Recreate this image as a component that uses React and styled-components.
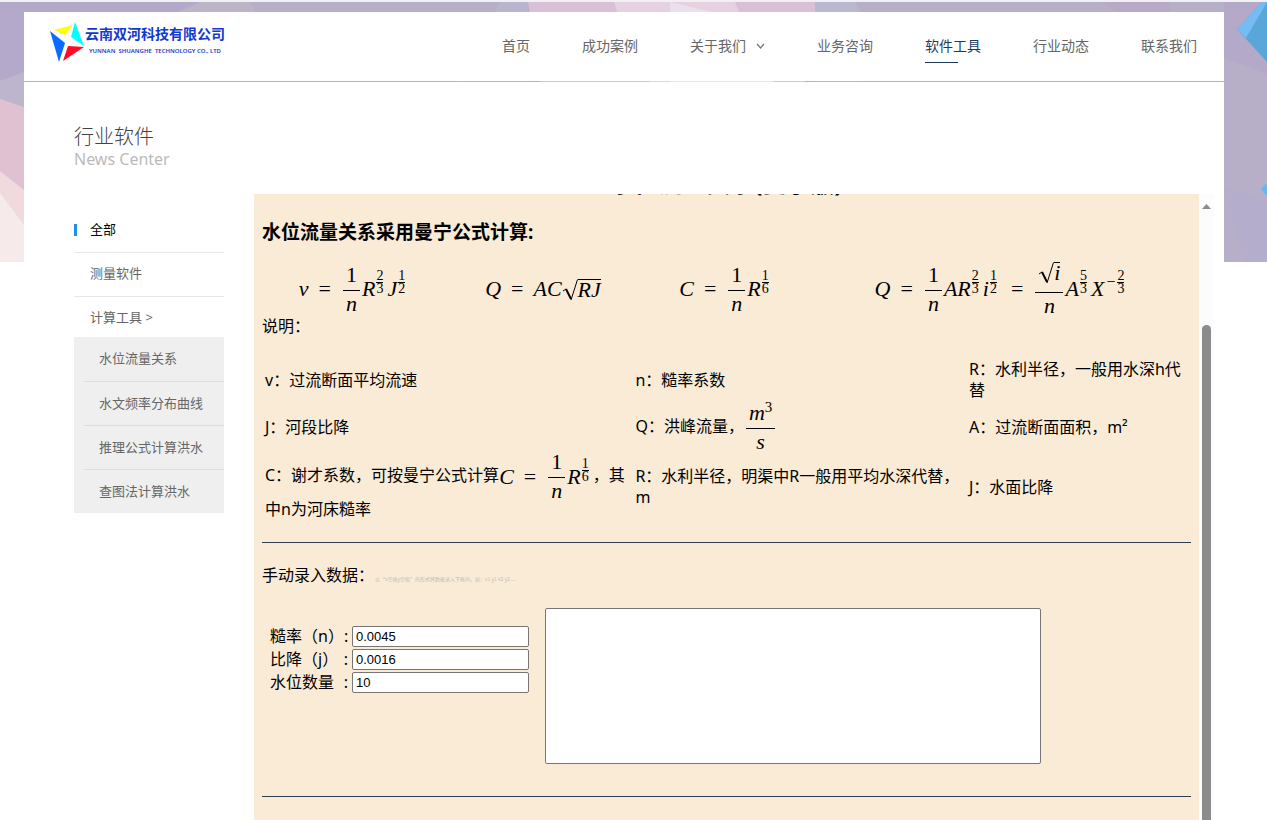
import styled, { createGlobalStyle } from 'styled-components'

const GlobalStyle = createGlobalStyle`
  * {
    box-sizing: border-box;
  }

  body {
    margin: 0;
    background: #fff;
    color: #000;
    font-family: 'Noto Sans', 'Noto Sans CJK SC', sans-serif;
    font-size: 16px;
    line-height: 21px;
  }

  a {
    color: inherit;
    text-decoration: none;
  }

  ul {
    margin: 0;
    padding: 0;
    list-style: none;
  }
`

const Page = styled.div`
  position: relative;
  display: flex;
  flex-direction: column;
  height: 100vh;
  padding: 10px 43px 0 24px;
  border-top: 2px solid #f1f1f1;
  overflow: hidden;
`

const Backdrop = styled.svg`
  position: absolute;
  top: 0;
  left: 0;
  width: 100%;
  height: 260px;
  z-index: -1;
`

const Header = styled.header`
  display: flex;
  align-items: center;
  justify-content: space-between;
  height: 69px;
  /* the 1px gap lets the backdrop show through as a rule */
  margin-bottom: 1px;
  padding: 0 27px 0 26px;
  background: #fff;
`

const Logo = styled.a`
  display: flex;
  height: 49px;
  color: #1238d0;

  svg {
    width: 35px;
    height: 41px;
  }
`

const LogoName = styled.strong`
  display: block;
  font-size: 14px;
  line-height: 24px;
`

const LogoSub = styled.small`
  display: block;
  padding-left: 4px;
  font-size: 6px;
  font-weight: 600;
  line-height: 10px;
  white-space: pre;
`

const Nav = styled.nav`
  display: flex;
  gap: 52px;
  font-size: 14px;
`

const NavLink = styled.a`
  position: relative;
  display: flex;
  align-items: center;
  gap: 10px;
  padding-bottom: 2px;
  color: ${({ $active }) => ($active ? '#1c3a5e' : '#666')};

  &::after {
    content: '';
    display: ${({ $active }) => ($active ? 'block' : 'none')};
    position: absolute;
    top: 27px;
    left: 0;
    width: 33px;
    height: 1px;
    background: #1c3a5e;
  }
`

const Body = styled.div`
  display: flex;
  flex: 1;
  flex-direction: column;
  min-height: 0;
  padding: 43px 10px 0 50px;
  background: #fff;
`

const Title = styled.h1`
  margin: 0;
  color: #444;
  font-size: 20px;
  font-weight: 300;
  line-height: 24px;
`

const Subtitle = styled.p`
  margin: 0;
  color: #bbb;
  line-height: 21px;
`

const Columns = styled.div`
  display: flex;
  flex: 1;
  gap: 30px;
  min-height: 0;
  margin-top: 24px;
`

const Sidebar = styled.aside`
  flex: 0 0 150px;
  padding-top: 15px;
  color: #666;
  font-size: 13px;
`

const SideLink = styled.a`
  display: flex;
  align-items: center;
  height: ${({ $last }) => ($last ? '40px' : '44px')};
  padding-bottom: ${({ $last }) => ($last ? '0' : '2px')};
  padding-left: ${({ $active }) => ($active ? '0' : '16px')};
  border-bottom: ${({ $last }) => ($last ? '0' : '1px solid #e8e8e8')};
  color: ${({ $active }) => ($active ? '#000' : 'inherit')};

  &::before {
    content: '';
    display: ${({ $active }) => ($active ? 'block' : 'none')};
    width: 3px;
    height: 12px;
    margin-right: 13px;
    background: #2490e3;
  }
`

const SubMenu = styled.ul`
  padding-left: 10px;
  background: #efefef;

  li + li {
    border-top: 1px solid #ddd;
  }

  a {
    display: flex;
    align-items: center;
    height: 43px;
    padding: 0 0 1px 15px;
  }

  li:first-child a {
    height: 44px;
  }
`

const Viewport = styled.div`
  display: flex;
  flex: 1;
  min-width: 0;
  overflow: hidden;
`

const Sheet = styled.main`
  flex: 1;
  min-width: 0;
  padding: 0 8px;
  background: #faebd7;
`

const SheetTitle = styled.h2`
  margin: -27px 0 0;
  font-size: 24px;
  line-height: 32px;
  text-align: center;
`

const SheetHeading = styled.h3`
  margin: 19px 0 0;
  font-size: 19px;
  line-height: 28px;
`

const ScrollTrack = styled.div`
  display: flex;
  flex: 0 0 15px;
  flex-direction: column;
  align-items: center;
  padding-top: 10px;
  background: #fcfcfc;

  svg {
    width: 9px;
    height: 5px;
  }
`

const ScrollThumb = styled.div`
  flex: 1;
  width: 9px;
  margin-top: 116px;
  border-radius: 5px 5px 0 0;
  background: #8b8b8b;
`

const Math = styled.span`
  display: inline-flex;
  align-items: center;
  font-family: 'Liberation Serif', serif;
  font-size: 22px;
  font-style: italic;
  line-height: 24px;
  vertical-align: middle;
`

const Formulas = styled.div`
  display: grid;
  grid-template-columns: 184fr 194fr 172fr 379fr;
  align-items: center;
  justify-items: center;
  height: 70px;
  padding-top: 14px;
`

const Equals = styled.span`
  padding: 0 10px;
  font-style: normal;
`

const Frac = styled.span`
  display: inline-flex;
  flex-direction: column;
  align-items: center;
  margin: 0 2px;

  > :first-child {
    align-self: stretch;
    padding: 0 3px 3px;
    border-bottom: 1px solid #000;
    text-align: center;
  }

  > :last-child {
    padding-top: 1px;
  }
`

const Upright = styled.span`
  font-style: normal;
`

const Cube = styled.sup`
  font-size: 15px;
  font-style: normal;
  line-height: 0;
`

const Power = styled.sup`
  display: inline-flex;
  flex-direction: column;
  align-items: center;
  margin: 0 4px 14px 1px;
  font-size: 14px;
  font-style: normal;
  line-height: 11px;

  > :first-child {
    padding-bottom: 1px;
    border-bottom: 1px solid #000;
  }
`

const Sign = styled.sup`
  margin: 0 1px 14px 2px;
  font-size: 16px;
  font-style: normal;
  line-height: 12px;
`

const Powered = styled.span`
  display: inline-flex;
  align-items: center;
`

const Root = styled.span`
  display: inline-flex;
  align-items: stretch;

  svg {
    width: 16px;
    height: 24px;
  }

  > span {
    height: 22px;
    margin-top: 2px;
    border-top: 1px solid #000;
    line-height: 20px;
  }
`

const Terms = styled.table`
  width: 100%;
  margin: 19px 0;
  border-spacing: 2px;
  table-layout: fixed;

  td {
    padding: 1px;
  }

  /* fractions may reach past their line, so rows stay compact */
  ${Math} {
    margin: -4px 0;
  }
`

const Rule = styled.hr`
  height: 1px;
  margin: 0;
  border: 0;
  background: #2c3e50;
`

const EntryTitle = styled.p`
  margin: 22px 0;
`

const Hint = styled.small`
  padding-left: 1px;
  color: #bbb;
  font-family: 'Noto Sans CJK SC', sans-serif;
  font-size: 5px;
  line-height: 10px;
`

const Entry = styled.form`
  display: flex;
  gap: 16px;
  margin-bottom: 32px;
  padding-left: 8px;
`

const Fields = styled.div`
  display: flex;
  flex-direction: column;
  gap: 2px;
  padding-top: 18px;
`

const Field = styled.label`
  display: flex;
  align-items: center;
  height: 21px;

  input {
    width: 177px;
    height: 21px;
    padding: 1px 3px;
    border: 1px solid #767676;
    border-radius: 2px;
    background: #fff;
    font-family: 'Liberation Sans', Arial, sans-serif;
    font-size: 13px;
  }
`

const FieldName = styled.span`
  display: flex;
  justify-content: space-between;
  width: 82px;
  padding-right: 4px;
  white-space: nowrap;
`

const DataBox = styled.textarea`
  width: 496px;
  height: 156px;
  border: 1px solid #767676;
  border-radius: 2px;
  background: #fff;
  resize: none;
`

const navItems = ['首页', '成功案例', '关于我们', '业务咨询', '软件工具', '行业动态', '联系我们']
const tools = ['水位流量关系', '水文频率分布曲线', '推理公式计算洪水', '查图法计算洪水']
const fields = [
  { id: 'roughness', name: '糙率（n）', value: '0.0045' },
  { id: 'slope', name: '比降（j）', value: '0.0016' },
  { id: 'levels', name: '水位数量', value: '10' },
]

function FracPower({ base, top, bottom, sign }) {
  return (
    <Powered>
      {base}
      {sign && <Sign>{sign}</Sign>}
      <Power>
        <span>{top}</span>
        <span>{bottom}</span>
      </Power>
    </Powered>
  )
}

function OneOverN() {
  return (
    <Frac>
      <Upright>1</Upright>
      <span>n</span>
    </Frac>
  )
}

function SquareRoot({ children }) {
  return (
    <Root>
      <svg viewBox="0 0 16 24" fill="none" stroke="#000">
        <path d="M1 14l3-2" />
        <path d="M4 12l5 10" strokeWidth="2" />
        <path d="M9 23L15.500 2.500" />
      </svg>
      <span>{children}</span>
    </Root>
  )
}

function ChezyFormula() {
  return (
    <Math>
      C<Equals>=</Equals>
      <OneOverN />
      <FracPower base="R" top="1" bottom="6" />
    </Math>
  )
}

function App() {
  return (
    <Page>
      <GlobalStyle />
      <Backdrop viewBox="0 0 1267 260" preserveAspectRatio="none">
        <rect width="1267" height="260" fill="#b7aec8" />
        <path d="M0 0H220L174 12 24 70 0 79z" fill="#b4a9ca" />
        <path d="M0 79L24 70V105L0 97z" fill="#bdb5cb" />
        <path d="M0 97L24 105V190L0 169z" fill="#dfc1d1" />
        <path d="M0 169L24 188V260H0z" fill="#f0dadd" />
        <path d="M0 191L24 223V260H0z" fill="#f6eaeb" />
        <path d="M174 12L200 0H250L256 12z" fill="#beb4c8" />
        <path d="M500 0H528V80H460z" fill="#b9b5cf" />
        <path d="M528 0H816V12L805 80H540z" fill="#dac0d7" />
        <path d="M614 0H735L740 12 774 80H650L618 12z" fill="#e6d1e1" />
        <path d="M670 0L720 12 774 80H670z" fill="#ebe1ee" />
        <path d="M815 0H855L862 12V80H815z" fill="#bab7d1" />
        <path d="M1100 0H1170V12H1124z" fill="#b8a9c7" />
        <path d="M1224 0H1267V72L1224 56z" fill="#b4a9c8" />
        <path d="M1224 185L1267 198V260H1245z" fill="#b5adcc" />
        <path d="M1237 27L1262 0H1267V60z" fill="#58a6da" />
        <path d="M1237 27L1262 0H1267L1246 36z" fill="#76bcf4" />
        <path d="M1261 187L1267 181V194z" fill="#68b4f4" />
      </Backdrop>

      <Header>
        <Logo href="#">
          <svg viewBox="0 0 35 41">
            <path d="M4 8L23 3 15 13z" fill="#ff0" />
            <path d="M25 0L34 24 21 15z" fill="#0ff" />
            <path d="M0 9L15 21 9 40z" fill="#0a6cff" />
            <path d="M18 24L34 25 13 39z" fill="#ff0a28" />
          </svg>
          <span>
            <LogoName>云南双河科技有限公司</LogoName>
            <LogoSub>YUNNAN  SHUANGHE  TECHNOLOGY CO., LTD</LogoSub>
          </span>
        </Logo>
        <Nav>
          {navItems.map((item) => (
            <NavLink key={item} href="#" $active={item === '软件工具'}>
              {item}
              {item === '关于我们' && (
                <svg width="9" height="9" viewBox="0 0 9 9" fill="none" stroke="#777">
                  <path d="M1 3L4.500 7 8 3" strokeWidth="1.200" />
                </svg>
              )}
            </NavLink>
          ))}
        </Nav>
      </Header>

      <Body>
        <Title>行业软件</Title>
        <Subtitle>News Center</Subtitle>

        <Columns>
          <Sidebar>
            <SideLink href="#" $active>全部</SideLink>
            <SideLink href="#">测量软件</SideLink>
            <SideLink href="#" $last>计算工具 &gt;</SideLink>
            <SubMenu>
              {tools.map((tool) => (
                <li key={tool}><a href="#">{tool}</a></li>
              ))}
            </SubMenu>
          </Sidebar>

          <Viewport>
            <Sheet>
              <SheetTitle>水位流量关系(曼宁版)</SheetTitle>
              <SheetHeading>水位流量关系采用曼宁公式计算:</SheetHeading>

              <Formulas>
                <Math>
                  v<Equals>=</Equals>
                  <OneOverN />
                  <FracPower base="R" top="2" bottom="3" />
                  <FracPower base="J" top="1" bottom="2" />
                </Math>
                <Math>
                  Q<Equals>=</Equals>AC
                  <SquareRoot>RJ</SquareRoot>
                </Math>
                <ChezyFormula />
                <Math>
                  Q<Equals>=</Equals>
                  <OneOverN />A
                  <FracPower base="R" top="2" bottom="3" />
                  <FracPower base="i" top="1" bottom="2" />
                  <Equals>=</Equals>
                  <Frac>
                    <span><SquareRoot>i</SquareRoot></span>
                    <span>n</span>
                  </Frac>
                  <FracPower base="A" top="5" bottom="3" />
                  <FracPower base="X" sign="−" top="2" bottom="3" />
                </Math>
              </Formulas>

              <div>说明：</div>

              <Terms>
                <colgroup>
                  <col width="40%" />
                  <col width="36%" />
                  <col width="24%" />
                </colgroup>
                <tbody>
                  <tr>
                    <td>v：过流断面平均流速</td>
                    <td>n：糙率系数</td>
                    <td>R：水利半径，一般用水深h代替</td>
                  </tr>
                  <tr>
                    <td>J：河段比降</td>
                    <td>
                      Q：洪峰流量，
                      <Math>
                        <Frac>
                          <span>m<Cube>3</Cube></span>
                          <span>s</span>
                        </Frac>
                      </Math>
                    </td>
                    <td>A：过流断面面积，m²</td>
                  </tr>
                  <tr>
                    <td>C：谢才系数，可按曼宁公式计算<ChezyFormula />，其中n为河床糙率</td>
                    <td>R：水利半径，明渠中R一般用平均水深代替，m</td>
                    <td>J：水面比降</td>
                  </tr>
                </tbody>
              </Terms>

              <Rule />

              <EntryTitle>
                手动录入数据：
                <Hint>以“x空格y空格”的形式将数据录入下框内，如：x1 y1 x2 y2 ...</Hint>
              </EntryTitle>

              <Entry>
                <Fields>
                  {fields.map(({ id, name, value }) => (
                    <Field key={id} htmlFor={id}>
                      <FieldName>{name}<span>:</span></FieldName>
                      <input id={id} type="text" defaultValue={value} />
                    </Field>
                  ))}
                </Fields>
                <DataBox aria-label="手动录入数据" />
              </Entry>

              <Rule />
            </Sheet>
            <ScrollTrack>
              <svg viewBox="0 0 9 5"><path d="M4.500 0L9 5H0z" fill="#8b8b8b" /></svg>
              <ScrollThumb />
            </ScrollTrack>
          </Viewport>
        </Columns>
      </Body>
    </Page>
  )
}

export default App
